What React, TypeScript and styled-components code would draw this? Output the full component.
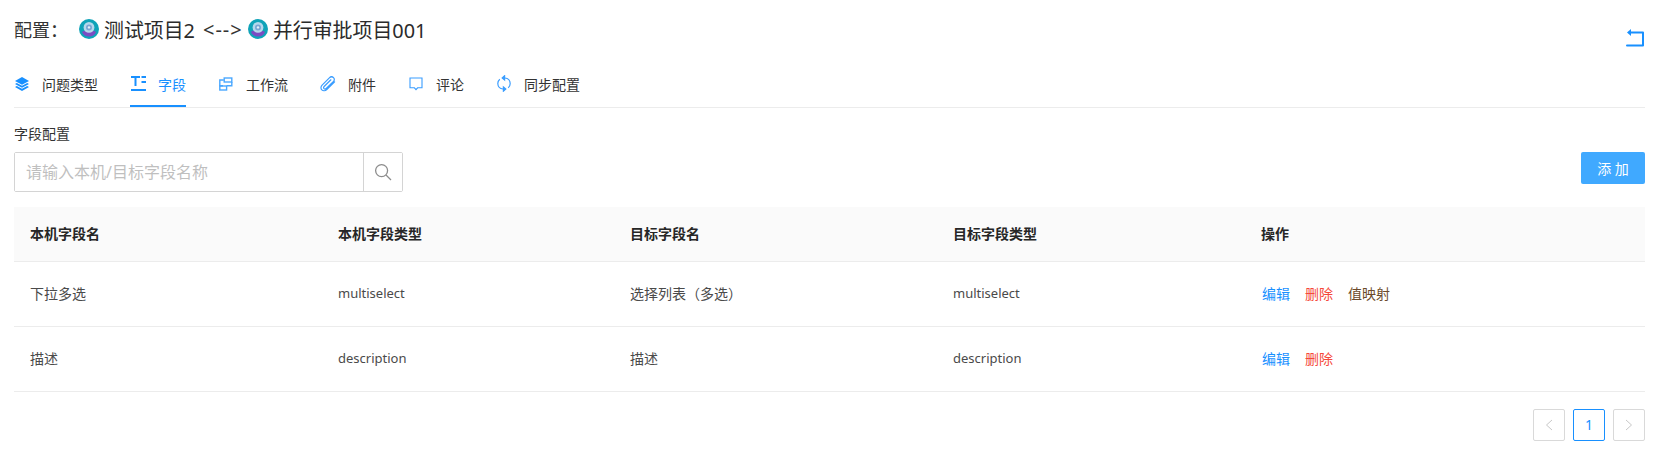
import React from 'react';
import styled, { createGlobalStyle } from 'styled-components';

const BLUE = '#1890ff';

const GlobalStyle = createGlobalStyle`
  html, body {
    margin: 0;
    padding: 0;
    background: #fff;
  }
  body {
    font-family: 'Noto Sans', 'Noto Sans CJK SC', sans-serif;
    color: #333;
  }
`;

const ProjectAvatar = () => (
  <svg width="20" height="20" viewBox="0 0 20 20">
    <circle cx="10" cy="10" r="10" fill="#0fa3b8" />
    <path d="M3 13C5 10.5 15 10.5 17 13C16 16 13 17.6 10 17.6C7 17.6 4 16 3 13Z" fill="#7a4cc2" />
    <circle cx="10" cy="8.4" r="5.4" fill="#b4d8ec" />
    <circle cx="10" cy="8.4" r="3" fill="#7aa6d4" />
    <circle cx="10" cy="8.4" r="1.2" fill="#e2f0f8" />
  </svg>
);

const LayersIcon = () => (
  <svg width="14" height="14" viewBox="0 0 14 14" fill={BLUE}>
    <path d="M7 0L14 3.9 7 7.8 0 3.9Z" />
    <path d="M1.8 5.9L7 8.8 12.2 5.9 14 6.9 7 10.8 0 6.9Z" />
    <path d="M1.8 8.9L7 11.8 12.2 8.9 14 9.9 7 14 0 9.9Z" />
  </svg>
);

const FieldIcon = () => (
  <svg width="15" height="15" viewBox="0 0 15 15" fill="none" stroke={BLUE} strokeWidth="2">
    <path d="M0 1H9M4.5 1V10" />
    <path d="M10.5 1H15M10.5 6H15" />
    <path d="M0 14H15" />
  </svg>
);

const WorkflowIcon = () => (
  <svg width="14" height="14" viewBox="0 0 14 14" fill="none" stroke="#4aa8ff" strokeWidth="1.4">
    <path d="M4.8 3H.8V8.8H4" />
    <rect x="5.2" y="1" width="7.6" height="4" />
    <path d="M12.8 5V8.8H7.6" />
    <rect x=".8" y="9" width="6.8" height="4" />
  </svg>
);

const ClipIcon = () => (
  <svg width="16" height="16" viewBox="0 0 16 16" fill="none" stroke="#3a9dff" strokeWidth="1.2" strokeLinecap="round">
    <path d="M14.6 5.8L6.8 13.6C5.3 15.1 3 15.1 1.8 13.9C.6 12.7.7 10.5 2.1 9.1L9.6 1.6C10.7.5 12.4.5 13.5 1.6C14.6 2.7 14.6 4.3 13.5 5.4L6.2 12.5C5.5 13.2 4.5 13.2 4 12.7C3.4 12.1 3.5 11.1 4.1 10.5L10.9 3.8" />
  </svg>
);

const CommentIcon = () => (
  <svg width="14" height="14" viewBox="0 0 14 14" fill="none" stroke="#3a9dff" strokeWidth="1.1">
    <path d="M1 1H13V10.8H8.6L7 12.6L5.4 10.8H1Z" />
  </svg>
);

const SyncIcon = () => (
  <svg width="14" height="17" viewBox="0 0 14 17" fill="none" stroke="#3a9dff" strokeWidth="1.2">
    <path d="M8 3C11 3.3 13.2 5.6 13.2 8.5C13.2 10.3 12.4 11.8 11.2 12.8" />
    <path d="M6 14C3 13.7 .8 11.4 .8 8.5C.8 6.7 1.6 5.2 2.8 4.2" />
    <path d="M7.6 .8L5.2 2.9L7.6 5Z" fill="#3a9dff" />
    <path d="M6.4 12L8.8 14.1L6.4 16.2Z" fill="#3a9dff" />
  </svg>
);

const ReturnIcon = () => (
  <svg width="19" height="20" viewBox="0 0 19 20" fill="none">
    <path d="M4 4.5H17V17.5H1" stroke={BLUE} strokeWidth="2" strokeLinejoin="round" strokeLinecap="round" />
    <path d="M5 1V8L1 4.5Z" fill={BLUE} />
  </svg>
);

const SearchIcon = () => (
  <svg width="18" height="18" viewBox="0 0 18 18" fill="none" stroke="#8c8c8c" strokeWidth="1.3">
    <circle cx="7.6" cy="7.6" r="6" />
    <path d="M12 12L17 17" />
  </svg>
);

const Chevron = ({ dir }: { dir: 'left' | 'right' }) => (
  <svg width="8" height="12" viewBox="0 0 8 12" fill="none" stroke="#c8c8c8" strokeWidth="1">
    <path d={dir === 'left' ? 'M7 1L1.5 6L7 11' : 'M1 1L6.5 6L1 11'} />
  </svg>
);

const tabs = [
  { label: '问题类型', icon: <LayersIcon />, inset: 1 },
  { label: '字段', icon: <FieldIcon />, inset: 1, active: true },
  { label: '工作流', icon: <WorkflowIcon />, inset: 1 },
  { label: '附件', icon: <ClipIcon />, inset: 0 },
  { label: '评论', icon: <CommentIcon />, inset: 1 },
  { label: '同步配置', icon: <SyncIcon />, inset: 1 },
];

const rows = [
  { local: '下拉多选', localType: 'multiselect', target: '选择列表（多选）', targetType: 'multiselect', mapped: true },
  { local: '描述', localType: 'description', target: '描述', targetType: 'description', mapped: false },
];

export default function App() {
  return (
    <Page>
      <GlobalStyle />
      <TitleRow>
        <Title>
          <TitleLabel>配置：</TitleLabel>
          <ProjectAvatar />
          <ProjectName>测试项目2</ProjectName>
          <Arrow>{'<-->'}</Arrow>
          <ProjectAvatar />
          <ProjectName>并行审批项目001</ProjectName>
        </Title>
        <BackButton type="button" aria-label="返回">
          <ReturnIcon />
        </BackButton>
      </TitleRow>

      <TabBar>
        {tabs.map((tab) => (
          <Tab key={tab.label} $active={tab.active}>
            <TabIcon $inset={tab.inset}>{tab.icon}</TabIcon>
            {tab.label}
          </Tab>
        ))}
      </TabBar>

      <SectionLabel>字段配置</SectionLabel>
      <Toolbar>
        <SearchBox>
          <SearchInput placeholder="请输入本机/目标字段名称" />
          <SearchButton type="button" aria-label="搜索">
            <SearchIcon />
          </SearchButton>
        </SearchBox>
        <AddButton type="button">添 加</AddButton>
      </Toolbar>

      <Table>
        <thead>
          <tr>
            <HeadCell $width={308}>本机字段名</HeadCell>
            <HeadCell $width={292}>本机字段类型</HeadCell>
            <HeadCell $width={323}>目标字段名</HeadCell>
            <HeadCell $width={308}>目标字段类型</HeadCell>
            <HeadCell>操作</HeadCell>
          </tr>
        </thead>
        <tbody>
          {rows.map((row) => (
            <tr key={row.local}>
              <BodyCell>{row.local}</BodyCell>
              <BodyCell $latin>{row.localType}</BodyCell>
              <BodyCell>{row.target}</BodyCell>
              <BodyCell $latin>{row.targetType}</BodyCell>
              <BodyCell>
                <Actions>
                  <ActionLink $color={BLUE}>编辑</ActionLink>
                  <ActionLink $color="#f5483b">删除</ActionLink>
                  {row.mapped && <ActionLink $color="#6b4a2b">值映射</ActionLink>}
                </Actions>
              </BodyCell>
            </tr>
          ))}
        </tbody>
      </Table>

      <Pagination>
        <PageButton type="button" aria-label="上一页">
          <Chevron dir="left" />
        </PageButton>
        <PageButton type="button" $active>
          1
        </PageButton>
        <PageButton type="button" aria-label="下一页">
          <Chevron dir="right" />
        </PageButton>
      </Pagination>
    </Page>
  );
}

const Page = styled.div`
  box-sizing: border-box;
  width: 1662px;
  height: 456px;
  padding: 0 17px 0 14px;
  overflow: hidden;
`;

const TitleRow = styled.div`
  display: flex;
  justify-content: space-between;
  height: 66px;
`;

const Title = styled.div`
  display: flex;
  align-items: center;
  height: 20px;
  margin-top: 19px;
  font-size: 18px;
  color: #333;
`;

const TitleLabel = styled.span`
  width: 65px;
`;

const ProjectName = styled.span`
  margin-left: 5px;
  font-size: 19.9px;
  color: #2b2b2b;
`;

const Arrow = styled.span`
  width: 37px;
  margin: 0 8px;
  font-size: 20px;
  letter-spacing: 1px;
  white-space: nowrap;
`;

const BackButton = styled.button`
  align-self: flex-start;
  width: 19px;
  height: 20px;
  margin-top: 28px;
  padding: 0;
  border: 0;
  background: none;
`;

const TabBar = styled.div`
  display: flex;
  gap: 32px;
  height: 41px;
  border-bottom: 1px solid #ececec;
  margin-bottom: 16px;
`;

const Tab = styled.div<{ $active?: boolean }>`
  display: flex;
  align-items: center;
  box-sizing: border-box;
  height: 41px;
  padding-bottom: 4px;
  font-size: 14px;
  white-space: nowrap;
  color: ${({ $active }) => ($active ? BLUE : '#333')};
  border-bottom: 2px solid ${({ $active }) => ($active ? BLUE : 'transparent')};
`;

const TabIcon = styled.span<{ $inset: number }>`
  display: flex;
  align-items: center;
  box-sizing: border-box;
  width: 28px;
  padding-left: ${({ $inset }) => $inset}px;
  flex: none;
`;

const SectionLabel = styled.div`
  height: 20px;
  line-height: 20px;
  font-size: 14px;
  color: #333;
`;

const Toolbar = styled.div`
  display: flex;
  justify-content: space-between;
  align-items: flex-start;
  margin-top: 8px;
  height: 40px;
  margin-bottom: 15px;
`;

const SearchBox = styled.div`
  display: flex;
  box-sizing: border-box;
  width: 389px;
  height: 40px;
  border: 1px solid #d4d4d4;
  border-radius: 2px;
`;

const SearchInput = styled.input`
  flex: 1;
  min-width: 0;
  padding: 0 11px;
  border: 0;
  outline: none;
  font: inherit;
  font-size: 16px;
  &::placeholder {
    color: #bfbfbf;
    opacity: 1;
  }
`;

const SearchButton = styled.button`
  display: flex;
  justify-content: center;
  align-items: center;
  width: 39px;
  padding: 0;
  border: 0;
  border-left: 1px solid #d4d4d4;
  background: #fff;
`;

const AddButton = styled.button`
  width: 64px;
  height: 32px;
  padding: 0;
  border: 0;
  border-radius: 2px;
  background: #40a9ff;
  color: #fff;
  font: inherit;
  font-size: 14px;
`;

const Table = styled.table`
  width: 100%;
  border-collapse: collapse;
  table-layout: fixed;
  font-size: 14px;
`;

const HeadCell = styled.th<{ $width?: number }>`
  width: ${({ $width }) => ($width ? `${$width}px` : 'auto')};
  height: 54px;
  padding: 0 16px 1px;
  box-sizing: border-box;
  background: #fafafa;
  border-bottom: 1px solid #ececec;
  text-align: left;
  font-weight: 700;
  color: #262626;
`;

const BodyCell = styled.td<{ $latin?: boolean }>`
  height: 65px;
  padding: 0 16px 2px;
  box-sizing: border-box;
  border-bottom: 1px solid #ececec;
  color: #4a4a4a;
  font-size: ${({ $latin }) => ($latin ? 13 : 14)}px;
`;

const Actions = styled.div`
  display: flex;
  gap: 15px;
  padding-left: 1px;
`;

const ActionLink = styled.span<{ $color: string }>`
  color: ${({ $color }) => $color};
`;

const Pagination = styled.div`
  display: flex;
  justify-content: flex-end;
  gap: 8px;
  margin-top: 17px;
`;

const PageButton = styled.button<{ $active?: boolean }>`
  display: flex;
  justify-content: center;
  align-items: center;
  box-sizing: border-box;
  width: 32px;
  height: 32px;
  padding: 0;
  border: 1px solid ${({ $active }) => ($active ? BLUE : '#d9d9d9')};
  border-radius: 2px;
  background: #fff;
  color: ${BLUE};
  font: inherit;
  font-size: 14px;
`;
